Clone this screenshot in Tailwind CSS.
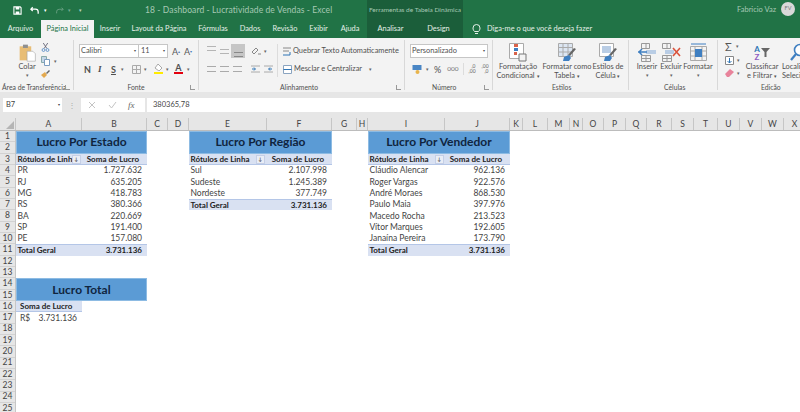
<!DOCTYPE html>
<html lang="pt-BR">
<head>
  <meta charset="UTF-8"/>
  <title>18 - Dashboard - Lucratividade de Vendas - Excel</title>
  <script src="https://cdn.jsdelivr.net/npm/@tailwindcss/browser@4"></script>
</head>
<body class="w-[800px] h-[412px] overflow-hidden bg-white flex flex-col font-['Lato','Liberation_Sans',sans-serif] text-[8.5px] leading-none text-[#444]">

  <!-- title bar -->
  <div class="h-[20px] shrink-0 bg-[#217346] flex items-center relative">
    <div class="flex items-center pl-[13px] gap-[8px] w-[145px]">
      <svg width="9" height="9" viewBox="0 0 10 10"><path d="M1 1h7l1 1v7H1z" fill="none" stroke="#fff" stroke-width="1.2"/><path d="M3 1h4v3H3zM3 6h4v3H3z" fill="#fff"/></svg>
      <svg width="10" height="9" viewBox="0 0 11 9"><path d="M3 1L1 3l2 2M1 3h5a3 3 0 0 1 3 3v2" fill="none" stroke="#fff" stroke-width="1.4"/></svg>
      <span class="text-white text-[5px] -ml-[4px]">▾</span>
      <svg width="9" height="9" viewBox="0 0 11 9" class="opacity-30"><path d="M8 1l2 2-2 2M10 3H5a3 3 0 0 0-3 3v2" fill="none" stroke="#fff" stroke-width="1.2"/></svg>
      <span class="text-white/40 text-[5px] -ml-[4px]">▾</span>
      <span class="text-white/70 text-[5px]">▾</span>
    </div>
    <span class="text-[#a6c9b4] text-[8.5px] tracking-[0.1px] whitespace-nowrap">18 - Dashboard - Lucratividade de Vendas - Excel</span>
    <div class="absolute left-[367px] top-0 w-[96px] h-[20px] bg-[#1b5e3a] flex items-center justify-center text-[#a6c9b4] text-[6.5px] whitespace-nowrap">Ferramentas de Tabela Dinâmica</div>
    <span class="absolute left-[737px] top-[6px] text-[#a6c9b4] text-[7.5px]">Fabricio Vaz</span>
    <div class="absolute left-[781px] top-[2px] w-[14px] h-[14px] rounded-full bg-[#d9d9d9] flex items-center justify-center text-[#777] text-[5.5px]">FV</div>
  </div>

  <!-- tabs -->
  <div class="h-[18px] shrink-0 bg-[#217346] flex text-[#e4efe8] text-[7.4px]">
    <div class="w-[41px] flex items-center justify-center">Arquivo</div>
    <div class="w-[53px] flex items-center justify-center bg-[#f3f3f3] text-[#217346]">Página Inicial</div>
    <div class="w-[32px] flex items-center justify-center">Inserir</div>
    <div class="w-[66px] flex items-center justify-center">Layout da Página</div>
    <div class="w-[42px] flex items-center justify-center">Fórmulas</div>
    <div class="w-[32px] flex items-center justify-center">Dados</div>
    <div class="w-[38px] flex items-center justify-center">Revisão</div>
    <div class="w-[29px] flex items-center justify-center">Exibir</div>
    <div class="w-[34px] flex items-center justify-center">Ajuda</div>
    <div class="w-[47px] flex items-center justify-center bg-[#1b5e3a]">Analisar</div>
    <div class="w-[49px] flex items-center justify-center bg-[#1b5e3a]">Design</div>
    <div class="flex items-center pl-[9px] gap-[6px]">
      <svg width="9" height="12" viewBox="0 0 9 12"><path d="M2.5 8.5C1.5 7.5 1 6.5 1 5a3.5 3.5 0 0 1 7 0c0 1.5-.5 2.5-1.5 3.5zM3 10.5h3" fill="none" stroke="#e4efe8"/></svg>
      <span>Diga-me o que você deseja fazer</span>
    </div>
  </div>

  <!-- ribbon -->
  <div class="h-[54px] shrink-0 bg-[#f3f3f3] flex text-[7.4px] text-[#505050]">
    <!-- area de transferencia -->
    <div class="w-[74px] shrink-0 flex flex-col border-r border-[#d8d8d8] my-[2px] relative">
      <div class="flex-1 flex pt-[3px]">
        <div class="w-[40px] pl-[14px] flex flex-col items-center">
          <svg width="19" height="19" viewBox="0 0 21 23" class="shrink-0"><path d="M1 4h14v17H1z" fill="#e8bd75"/><path d="M5 2h6v4H5z" fill="#8f8f8f"/><path d="M10 10h7l3 3v9H10z" fill="#fff" stroke="#a0a0a0" stroke-width=".7"/></svg>
          <span class="mt-[1px]">Colar</span>
          <span class="text-[5px] mt-[3px] text-[#666]">▾</span>
        </div>
        <div class="flex flex-col gap-[4px] pl-[1px]">
          <svg width="9" height="9" viewBox="0 0 9 10"><path d="M2 0l4 6M7 0L3 6" stroke="#667" fill="none"/><circle cx="2.3" cy="7.8" r="1.6" fill="none" stroke="#5b8fc7"/><circle cx="6.7" cy="7.8" r="1.6" fill="none" stroke="#5b8fc7"/></svg>
          <div class="flex items-center gap-[4px]">
            <svg width="9" height="10" viewBox="0 0 9 10"><path d="M.5.5h5v6h-5z" fill="#c5d6e8" stroke="#8aa"/><path d="M3.5 3.5h5v6h-5z" fill="#fff" stroke="#7a9cc0"/></svg>
            <span class="text-[5px] text-[#666]">▾</span>
          </div>
          <svg width="9" height="8" viewBox="0 0 9 8"><path d="M0 5l4-3 2 3-3 3z" fill="#e3a94f"/><path d="M5 3l3-3 1 1-3 3z" fill="#666"/></svg>
        </div>
      </div>
      <div class="h-[5px] flex items-center pl-[2px] text-[6.8px] whitespace-nowrap">Área de Transferência</div>
      <span class="absolute right-[3px] bottom-0 w-[5px] h-[5px] border-l border-b border-[#999]"></span>
    </div>

    <!-- fonte -->
    <div class="w-[125px] shrink-0 flex flex-col border-r border-[#d8d8d8] my-[2px] relative">
      <div class="flex-1 flex flex-col pl-[5px] pt-[4px]">
        <div class="flex items-center h-[14px]">
          <div class="w-[60px] h-[14px] bg-white border border-[#c6c6c6] flex items-center justify-between pl-[1px] pr-[2px]">Calibri<span class="text-[4px]">▾</span></div>
          <div class="w-[29px] h-[14px] bg-white border border-l-0 border-[#c6c6c6] flex items-center justify-between pl-[2px] pr-[2px]">11<span class="text-[4px]">▾</span></div>
          <span class="ml-[4px] w-[11px] text-[9px] text-[#555]">A<sup class="text-[4px] text-[#4a7ebb]">▴</sup></span>
          <span class="ml-[1px] text-[9px] text-[#555]">A<sup class="text-[4px] text-[#4a7ebb]">▾</sup></span>
        </div>
        <div class="flex items-center h-[14px] mt-[4px] pl-[5px]">
          <span class="w-[14px] font-bold text-[9px]">N</span>
          <span class="w-[13px] italic font-bold text-[9px] font-['Liberation_Serif']">I</span>
          <span class="w-[10px] underline font-bold text-[9px]">S</span>
          <span class="w-[11px] text-[5px] text-[#666]">▾</span>
          <svg width="9" height="9" viewBox="0 0 9 9"><path d="M.5.5h8v8h-8zM4.5.5v8M.5 4.5h8" fill="none" stroke="#aaa"/></svg>
          <span class="w-[13px] text-[5px] text-[#666] pl-[3px]">▾</span>
          <div class="flex flex-col items-center w-[9px]">
            <svg width="9" height="7" viewBox="0 0 9 7"><path d="M4 0l4 4-3 3-4-3z" fill="#fff" stroke="#888" stroke-width=".7"/></svg>
            <span class="w-[9px] h-[2px] bg-[#ffeb00] mt-[1px]"></span>
          </div>
          <span class="w-[11px] text-[5px] text-[#666] pl-[3px]">▾</span>
          <div class="flex flex-col items-center w-[9px]">
            <span class="text-[9px] font-bold h-[7px] leading-[7px]">A</span>
            <span class="w-[9px] h-[2px] bg-[#e3000f] mt-[1px]"></span>
          </div>
          <span class="text-[5px] text-[#666] pl-[4px]">▾</span>
        </div>
      </div>
      <div class="h-[5px] flex items-center justify-center text-[6.8px]">Fonte</div>
      <span class="absolute right-[3px] bottom-0 w-[5px] h-[5px] border-l border-b border-[#999]"></span>
    </div>

    <!-- alinhamento -->
    <div class="w-[206px] shrink-0 flex flex-col border-r border-[#d8d8d8] my-[2px] relative">
      <div class="flex-1 flex pt-[4px]">
        <div class="w-[78px] shrink-0 flex flex-col">
          <div class="flex items-center h-[14px] pl-[6px]">
            <div class="w-[13px] h-[14px] flex items-center justify-center"><span class="w-[9px] h-[5px] border-y border-[#b5b5b5] -translate-y-[3px]"></span></div>
            <div class="w-[13px] h-[14px] flex items-center justify-center"><span class="w-[9px] h-[5px] border-y border-[#b5b5b5]"></span></div>
            <div class="w-[14px] h-[14px] bg-[#c6c6c6] flex items-center justify-center"><span class="w-[9px] h-[5px] border-y border-[#888] translate-y-[3px]"></span></div>
            <svg width="10" height="9" viewBox="0 0 10 9" class="ml-[6px]"><path d="M1 5l4-4 2 2-4 4zM7 7h3" fill="none" stroke="#888"/></svg>
            <span class="text-[5px] text-[#666] ml-[3px]">▾</span>
          </div>
          <div class="flex items-center h-[14px] mt-[4px] pl-[8px] gap-[4px]">
            <span class="w-[9px] h-[6px] border-y border-[#aaa]"></span>
            <span class="w-[9px] h-[6px] border-y border-[#aaa]"></span>
            <span class="w-[9px] h-[6px] border-y border-[#aaa]"></span>
            <svg width="9" height="8" viewBox="0 0 9 8" class="ml-[5px]"><path d="M0 1h9M0 7h9" stroke="#aaa"/><path d="M1 4h3M3 2.5L4.5 4 3 5.5" stroke="#2f75b5" fill="none"/></svg>
            <svg width="9" height="8" viewBox="0 0 9 8"><path d="M0 1h9M0 7h9" stroke="#aaa"/><path d="M8 4H5M6 2.5L4.5 4 6 5.5" stroke="#2f75b5" fill="none"/></svg>
          </div>
        </div>
        <span class="w-px h-[33px] bg-[#dcdcdc]"></span>
        <div class="flex flex-col pl-[5px]">
          <div class="flex items-center h-[14px] gap-[2px] whitespace-nowrap">
            <svg width="8" height="9" viewBox="0 0 8 9"><path d="M0 8h5M7 5v3H5" stroke="#2f75b5" fill="none"/><path d="M0 1h8M0 4h6" stroke="#888"/></svg>
            Quebrar Texto Automaticamente
          </div>
          <div class="flex items-center h-[14px] mt-[4px] gap-[2px] whitespace-nowrap">
            <svg width="9" height="9" viewBox="0 0 9 9"><path d="M.5.5h8v8h-8z" fill="#fff" stroke="#8aa4c0"/><path d="M.5 4.5h8" stroke="#2f75b5"/></svg>
            Mesclar e Centralizar
            <span class="text-[5px] text-[#666] ml-[5px]">▾</span>
          </div>
        </div>
      </div>
      <div class="h-[5px] flex items-center pl-[81px] text-[6.8px]">Alinhamento</div>
      <span class="absolute right-[3px] bottom-0 w-[5px] h-[5px] border-l border-b border-[#999]"></span>
    </div>

    <!-- numero -->
    <div class="w-[88px] shrink-0 flex flex-col border-r border-[#d8d8d8] my-[2px] relative">
      <div class="flex-1 flex flex-col pl-[5px] pt-[4px]">
        <div class="w-[78px] h-[14px] bg-white border border-[#c6c6c6] flex items-center justify-between pl-[1px] pr-[2px]">Personalizado<span class="text-[4px]">▾</span></div>
        <div class="flex items-center h-[14px] mt-[4px] pl-[2px]">
          <svg width="10" height="10" viewBox="0 0 9 10"><path d="M0 1h9v5H0z" fill="#4a86c5"/><circle cx="5" cy="8" r="2" fill="#e8b44c"/></svg>
          <span class="text-[5px] text-[#666] ml-[4px]">▾</span>
          <span class="ml-[5px] text-[9px]">%</span>
          <span class="ml-[6px] text-[6.5px] text-[#777]">000</span>
          <span class="w-px h-[12px] bg-[#dcdcdc] ml-[4px]"></span>
          <span class="ml-[4px] text-[5px] leading-[5px] text-[#666] text-right w-[8px]">,0<br/>,00</span>
          <span class="ml-[5px] text-[5px] leading-[5px] text-[#666] text-right w-[8px]">,00<br/>,0</span>
        </div>
      </div>
      <div class="h-[5px] flex items-center pl-[27px] text-[6.8px]">Número</div>
      <span class="absolute right-[3px] bottom-0 w-[5px] h-[5px] border-l border-b border-[#999]"></span>
    </div>

    <!-- estilos -->
    <div class="w-[136px] shrink-0 flex flex-col border-r border-[#d8d8d8] my-[2px]">
      <div class="flex-1 flex pt-[3px]">
        <div class="w-[50px] flex flex-col items-center">
          <svg width="18" height="19" viewBox="0 0 18 19"><path d="M.5.5h14v15H.5z" fill="#fff" stroke="#aaa"/><path d="M5 1h4v3H5z" fill="#d9634a"/><path d="M5 5h4v3H5z" fill="#3f7fc1"/><path d="M5 9h3v3H5z" fill="#d9634a"/><path d="M10 11h7v7h-7z" fill="#f3f3f3" stroke="#777"/></svg>
          <span class="mt-[1px]">Formatação</span>
          <span class="mt-[2px] whitespace-nowrap">Condicional <span class="text-[5px]">▾</span></span>
        </div>
        <div class="w-[48px] flex flex-col items-center">
          <svg width="19" height="19" viewBox="0 0 19 19"><path d="M.5.5h14v13H.5z" fill="#dce6f2" stroke="#aaa"/><path d="M.5 4.5h14M.5 9h14M5 .5v13M10 .5v13" stroke="#aaa" fill="none"/><path d="M18 6l-6 7-2-1 6-7z" fill="#666"/><path d="M6 14l5-2 2 3-2 3H5z" fill="#3f7fc1"/></svg>
          <span class="mt-[1px] whitespace-nowrap">Formatar como</span>
          <span class="mt-[2px] whitespace-nowrap">Tabela <span class="text-[5px]">▾</span></span>
        </div>
        <div class="w-[34px] flex flex-col items-center">
          <svg width="19" height="19" viewBox="0 0 19 19"><path d="M.5.5h14v13H.5z" fill="#fff" stroke="#aaa"/><path d="M3 3h9v7H3z" fill="#b9cde5"/><path d="M18 6l-6 7-2-1 6-7z" fill="#666"/><path d="M6 14l5-2 2 3-2 3H5z" fill="#3f7fc1"/></svg>
          <span class="mt-[1px] whitespace-nowrap">Estilos de</span>
          <span class="mt-[2px] whitespace-nowrap">Célula <span class="text-[5px]">▾</span></span>
        </div>
      </div>
      <div class="h-[5px] flex items-center pl-[59px] text-[6.8px]">Estilos</div>
    </div>

    <!-- celulas -->
    <div class="w-[89px] shrink-0 flex flex-col border-r border-[#d8d8d8] my-[2px]">
      <div class="flex-1 flex pt-[3px] pl-[6px]">
        <div class="w-[24px] flex flex-col items-center">
          <svg width="19" height="19" viewBox="0 0 19 19"><path d="M3.5.5h8v5h-8zM3.5 12.5h9v6h-9zM8 .5v5M8 12.5v6M3.5 15.5h9" fill="none" stroke="#999"/><path d="M8 7h10v4H8z" fill="#b9cde5"/><path d="M0 9h9M4 6L1 9l3 3" fill="none" stroke="#3f7fc1" stroke-width="1.5"/></svg>
          <span class="mt-[1px]">Inserir</span>
          <span class="text-[5px] mt-[3px] text-[#666]">▾</span>
        </div>
        <div class="w-[24px] flex flex-col items-center">
          <svg width="19" height="19" viewBox="0 0 19 19"><path d="M.5.5h8v5h-8zM.5 12.5h9v6h-9zM5 .5v5M5 12.5v6M.5 15.5h9" fill="none" stroke="#999"/><path d="M3 7h9v4H3z" fill="#b9cde5"/><path d="M11 5l7 8M18 5l-7 8" stroke="#d9523c" stroke-width="1.6"/></svg>
          <span class="mt-[1px]">Excluir</span>
          <span class="text-[5px] mt-[3px] text-[#666]">▾</span>
        </div>
        <div class="w-[30px] flex flex-col items-center">
          <svg width="19" height="19" viewBox="0 0 19 19"><path d="M1.5 3.5h16v14h-16zM1.5 8h16M1.5 13h16M6 3.5v14M13 3.5v14" fill="none" stroke="#aaa"/><path d="M6 6h7v8H6z" fill="#3f7fc1"/><path d="M2 1h15" stroke="#3f7fc1"/></svg>
          <span class="mt-[1px]">Formatar</span>
          <span class="text-[5px] mt-[3px] text-[#666]">▾</span>
        </div>
      </div>
      <div class="h-[5px] flex items-center pl-[35px] text-[6.8px]">Células</div>
    </div>

    <!-- edicao -->
    <div class="flex-1 flex flex-col my-[2px] overflow-hidden">
      <div class="flex-1 flex pt-[3px] pl-[7px]">
        <div class="w-[16px] -mt-[2px] flex flex-col gap-[3px] shrink-0">
          <div class="flex items-center gap-[4px] h-[11px]"><span class="text-[11px] text-[#555]">Σ</span><span class="text-[5px] text-[#666]">▾</span></div>
          <div class="flex items-center gap-[3px] h-[10px]"><svg width="9" height="9" viewBox="0 0 9 9"><path d="M.5.5h8v8h-8z" fill="#fff" stroke="#888"/><path d="M4.5 2v5M2.5 5l2 2 2-2" fill="none" stroke="#2f75b5"/></svg><span class="text-[5px] text-[#666]">▾</span></div>
          <div class="flex items-center gap-[3px] h-[10px]"><svg width="9" height="8" viewBox="0 0 9 8"><path d="M0 5l5-5 4 3-5 5H2z" fill="#e8839b"/></svg><span class="text-[5px] text-[#666]">▾</span></div>
        </div>
        <div class="w-[36px] ml-[3px] flex flex-col items-center shrink-0">
          <div class="flex items-center h-[19px]">
            <span class="text-[8px] leading-[8px] font-bold text-center"><span class="text-[#2f75b5]">A</span><br/><span class="text-[#8e5cc2]">Z</span></span>
            <svg width="9" height="9" viewBox="0 0 9 9" class="ml-[1px]"><path d="M0 0h9L5.5 4v5h-2V4z" fill="#666"/></svg>
          </div>
          <span class="mt-[1px] whitespace-nowrap">Classificar</span>
          <span class="mt-[2px] whitespace-nowrap">e Filtrar <span class="text-[5px]">▾</span></span>
        </div>
        <div class="ml-[2px] flex flex-col items-start shrink-0 w-[40px]">
          <svg width="19" height="19" viewBox="0 0 19 19" class="ml-[7px]"><circle cx="11" cy="7" r="5.5" fill="#fff" stroke="#3f7fc1" stroke-width="1.6"/><path d="M7 11l-5 6" stroke="#3f7fc1" stroke-width="2.2"/></svg>
          <span class="mt-[1px] whitespace-nowrap">Localizar e</span>
          <span class="mt-[2px] whitespace-nowrap">Selecionar</span>
        </div>
      </div>
      <div class="h-[5px] flex items-center pl-[43px] text-[6.8px]">Edição</div>
    </div>
  </div>

  <!-- formula bar -->
  <div class="h-[26px] shrink-0 bg-[#e6e6e6] flex items-center text-[7.5px]">
    <div class="w-[59px] h-[14px] ml-[3px] bg-white flex items-center justify-between pl-[3px] pr-[2px]">B7<span class="text-[4px]">▾</span></div>
    <div class="w-[19px] text-center text-[#aaa] text-[8px]">⋮</div>
    <div class="w-[64px] h-[14px] bg-white flex items-center text-[#bbb]">
      <svg width="8" height="8" viewBox="0 0 8 8" class="ml-[7px]"><path d="M1 1l6 6M7 1L1 7" stroke="#c4c4c4"/></svg>
      <svg width="9" height="8" viewBox="0 0 9 8" class="ml-[12px]"><path d="M1 4l2.5 3L8 1" fill="none" stroke="#c4c4c4"/></svg>
      <span class="ml-[11px] text-[#666] italic text-[9px] font-['Liberation_Serif']">fx</span>
    </div>
    <div class="flex-1 h-[14px] ml-[2px] bg-white flex items-center pl-[6px]">380365,78</div>
  </div>

  <!-- column headers -->
  <div class="h-[12px] shrink-0 flex bg-[#e6e6e6] text-[8.5px] text-[#444]">
    <div class="w-[16px] shrink-0 border-r border-[#c6c6c6] flex items-end justify-end"><span class="w-0 h-0 border-l-[8px] border-b-[8px] border-l-transparent border-b-[#b5b5b5] mr-[1px] mb-[1px]"></span></div>
    <div class="w-[66px] shrink-0 border-r border-[#c6c6c6] flex items-center justify-center">A</div>
    <div class="w-[65px] shrink-0 border-r border-[#c6c6c6] flex items-center justify-center">B</div>
    <div class="w-[21px] shrink-0 border-r border-[#c6c6c6] flex items-center justify-center">C</div>
    <div class="w-[21px] shrink-0 border-r border-[#c6c6c6] flex items-center justify-center">D</div>
    <div class="w-[78px] shrink-0 border-r border-[#c6c6c6] flex items-center justify-center">E</div>
    <div class="w-[65px] shrink-0 border-r border-[#c6c6c6] flex items-center justify-center">F</div>
    <div class="w-[25px] shrink-0 border-r border-[#c6c6c6] flex items-center justify-center">G</div>
    <div class="w-[11px] shrink-0 border-r border-[#c6c6c6] flex items-center justify-center">H</div>
    <div class="w-[77px] shrink-0 border-r border-[#c6c6c6] flex items-center justify-center">I</div>
    <div class="w-[65px] shrink-0 border-r border-[#c6c6c6] flex items-center justify-center">J</div>
    <div class="w-[13px] shrink-0 border-r border-[#c6c6c6] flex items-center justify-center">K</div>
    <div class="w-[25px] shrink-0 border-r border-[#c6c6c6] flex items-center justify-center">L</div>
    <div class="w-[22px] shrink-0 border-r border-[#c6c6c6] flex items-center justify-center">M</div>
    <div class="w-[13px] shrink-0 border-r border-[#c6c6c6] flex items-center justify-center">N</div>
    <div class="w-[21px] shrink-0 border-r border-[#c6c6c6] flex items-center justify-center">O</div>
    <div class="w-[22px] shrink-0 border-r border-[#c6c6c6] flex items-center justify-center">P</div>
    <div class="w-[21px] shrink-0 border-r border-[#c6c6c6] flex items-center justify-center">Q</div>
    <div class="w-[25px] shrink-0 border-r border-[#c6c6c6] flex items-center justify-center">R</div>
    <div class="w-[22px] shrink-0 border-r border-[#c6c6c6] flex items-center justify-center">S</div>
    <div class="w-[24px] shrink-0 border-r border-[#c6c6c6] flex items-center justify-center">T</div>
    <div class="w-[22px] shrink-0 border-r border-[#c6c6c6] flex items-center justify-center">U</div>
    <div class="w-[22px] shrink-0 border-r border-[#c6c6c6] flex items-center justify-center">V</div>
    <div class="w-[22px] shrink-0 border-r border-[#c6c6c6] flex items-center justify-center">W</div>
    <div class="w-[22px] shrink-0 border-r border-[#c6c6c6] flex items-center justify-center">X</div>
  </div>

  <!-- sheet -->
  <div class="flex-1 flex min-h-0 border-t border-[#bcbcbc]">
    <div class="w-[16px] shrink-0 bg-[#e6e6e6] border-r border-[#c6c6c6] flex flex-col text-[8.5px] text-[#444]">
      <div class="h-[11.33px] shrink-0 border-b border-[#d2d2d2] flex items-center justify-center">1</div>
      <div class="h-[11.33px] shrink-0 border-b border-[#d2d2d2] flex items-center justify-center">2</div>
      <div class="h-[11.33px] shrink-0 border-b border-[#d2d2d2] flex items-center justify-center">3</div>
      <div class="h-[11.33px] shrink-0 border-b border-[#d2d2d2] flex items-center justify-center">4</div>
      <div class="h-[11.33px] shrink-0 border-b border-[#d2d2d2] flex items-center justify-center">5</div>
      <div class="h-[11.33px] shrink-0 border-b border-[#d2d2d2] flex items-center justify-center">6</div>
      <div class="h-[11.33px] shrink-0 border-b border-[#d2d2d2] flex items-center justify-center">7</div>
      <div class="h-[11.33px] shrink-0 border-b border-[#d2d2d2] flex items-center justify-center">8</div>
      <div class="h-[11.33px] shrink-0 border-b border-[#d2d2d2] flex items-center justify-center">9</div>
      <div class="h-[11.33px] shrink-0 border-b border-[#d2d2d2] flex items-center justify-center">10</div>
      <div class="h-[11.33px] shrink-0 border-b border-[#d2d2d2] flex items-center justify-center">11</div>
      <div class="h-[11.33px] shrink-0 border-b border-[#d2d2d2] flex items-center justify-center">12</div>
      <div class="h-[11.33px] shrink-0 border-b border-[#d2d2d2] flex items-center justify-center">13</div>
      <div class="h-[11.33px] shrink-0 border-b border-[#d2d2d2] flex items-center justify-center">14</div>
      <div class="h-[11.33px] shrink-0 border-b border-[#d2d2d2] flex items-center justify-center">15</div>
      <div class="h-[11.33px] shrink-0 border-b border-[#d2d2d2] flex items-center justify-center">16</div>
      <div class="h-[11.33px] shrink-0 border-b border-[#d2d2d2] flex items-center justify-center">17</div>
      <div class="h-[11.33px] shrink-0 border-b border-[#d2d2d2] flex items-center justify-center">18</div>
      <div class="h-[11.33px] shrink-0 border-b border-[#d2d2d2] flex items-center justify-center">19</div>
      <div class="h-[11.33px] shrink-0 border-b border-[#d2d2d2] flex items-center justify-center">20</div>
      <div class="h-[11.33px] shrink-0 border-b border-[#d2d2d2] flex items-center justify-center">21</div>
      <div class="h-[11.33px] shrink-0 border-b border-[#d2d2d2] flex items-center justify-center">22</div>
      <div class="h-[11.33px] shrink-0 border-b border-[#d2d2d2] flex items-center justify-center">23</div>
      <div class="h-[11.33px] shrink-0 border-b border-[#d2d2d2] flex items-center justify-center">24</div>
      <div class="h-[11.33px] shrink-0 border-b border-[#d2d2d2] flex items-center justify-center">25</div>
    </div>

    <div class="flex-1 grid grid-cols-[66px_65px_21px_21px_78px_65px_25px_11px_77px_65px] grid-rows-[repeat(25,11.33px)] text-[8.5px] text-[#444]">
      <!-- por estado -->
      <div class="col-start-1 col-span-2 row-start-1 row-span-2 bg-[#5b9bd5] border border-[#8dbbe3] flex items-center justify-center text-[12px] font-bold text-[#10253f]">Lucro Por Estado</div>
      <div class="col-start-1 row-start-3 bg-[#d9e1f2] border-b border-[#b4c6e7] flex items-center font-bold text-[8px] text-[#222] pl-[1.5px] overflow-hidden relative whitespace-nowrap">Rótulos de Linha<span class="absolute right-[1px] top-[1px] w-[9px] h-[9px] bg-[#e9edf6] border border-[#c5cfe6] text-[5px] flex items-center justify-center text-[#555]">↓</span></div>
      <div class="col-start-2 row-start-3 bg-[#d9e1f2] border-b border-[#b4c6e7] flex items-center justify-end font-bold text-[8px] text-[#222] pr-[8px]">Soma de Lucro</div>
      <div class="col-start-1 col-span-2 row-start-4 flex items-center justify-between pl-[1.5px] pr-[5px]"><span>PR</span><span>1.727.632</span></div>
      <div class="col-start-1 col-span-2 row-start-5 flex items-center justify-between pl-[1.5px] pr-[5px]"><span>RJ</span><span>635.205</span></div>
      <div class="col-start-1 col-span-2 row-start-6 flex items-center justify-between pl-[1.5px] pr-[5px]"><span>MG</span><span>418.783</span></div>
      <div class="col-start-1 col-span-2 row-start-7 flex items-center justify-between pl-[1.5px] pr-[5px]"><span>RS</span><span>380.366</span></div>
      <div class="col-start-1 col-span-2 row-start-8 flex items-center justify-between pl-[1.5px] pr-[5px]"><span>BA</span><span>220.669</span></div>
      <div class="col-start-1 col-span-2 row-start-9 flex items-center justify-between pl-[1.5px] pr-[5px]"><span>SP</span><span>191.400</span></div>
      <div class="col-start-1 col-span-2 row-start-10 flex items-center justify-between pl-[1.5px] pr-[5px]"><span>PE</span><span>157.080</span></div>
      <div class="col-start-1 col-span-2 row-start-11 bg-[#d9e1f2] border-t border-[#b4c6e7] flex items-center justify-between pl-[1.5px] pr-[5px] font-bold text-[8px] text-[#222]"><span>Total Geral</span><span>3.731.136</span></div>

      <!-- por regiao -->
      <div class="col-start-5 col-span-2 row-start-1 row-span-2 bg-[#5b9bd5] border border-[#8dbbe3] flex items-center justify-center text-[12px] font-bold text-[#10253f]">Lucro Por Região</div>
      <div class="col-start-5 row-start-3 bg-[#d9e1f2] border-b border-[#b4c6e7] flex items-center font-bold text-[8px] text-[#222] pl-[1.5px] relative whitespace-nowrap">Rótulos de Linha<span class="absolute right-[2px] top-[1px] w-[9px] h-[9px] bg-[#e9edf6] border border-[#c5cfe6] text-[5px] flex items-center justify-center text-[#555]">↓</span></div>
      <div class="col-start-6 row-start-3 bg-[#d9e1f2] border-b border-[#b4c6e7] flex items-center justify-end font-bold text-[8px] text-[#222] pr-[8px]">Soma de Lucro</div>
      <div class="col-start-5 col-span-2 row-start-4 flex items-center justify-between pl-[1.5px] pr-[5px]"><span>Sul</span><span>2.107.998</span></div>
      <div class="col-start-5 col-span-2 row-start-5 flex items-center justify-between pl-[1.5px] pr-[5px]"><span>Sudeste</span><span>1.245.389</span></div>
      <div class="col-start-5 col-span-2 row-start-6 flex items-center justify-between pl-[1.5px] pr-[5px]"><span>Nordeste</span><span>377.749</span></div>
      <div class="col-start-5 col-span-2 row-start-7 bg-[#d9e1f2] border-t border-[#b4c6e7] flex items-center justify-between pl-[1.5px] pr-[5px] font-bold text-[8px] text-[#222]"><span>Total Geral</span><span>3.731.136</span></div>

      <!-- por vendedor -->
      <div class="col-start-9 col-span-2 row-start-1 row-span-2 bg-[#5b9bd5] border border-[#8dbbe3] flex items-center justify-center text-[12px] font-bold text-[#10253f]">Lucro Por Vendedor</div>
      <div class="col-start-9 row-start-3 bg-[#d9e1f2] border-b border-[#b4c6e7] flex items-center font-bold text-[8px] text-[#222] pl-[1.5px] relative whitespace-nowrap">Rótulos de Linha<span class="absolute right-[1px] top-[1px] w-[9px] h-[9px] bg-[#e9edf6] border border-[#c5cfe6] text-[5px] flex items-center justify-center text-[#555]">↓</span></div>
      <div class="col-start-10 row-start-3 bg-[#d9e1f2] border-b border-[#b4c6e7] flex items-center justify-end font-bold text-[8px] text-[#222] pr-[8px]">Soma de Lucro</div>
      <div class="col-start-9 col-span-2 row-start-4 flex items-center justify-between pl-[1.5px] pr-[5px]"><span>Cláudio Alencar</span><span>962.136</span></div>
      <div class="col-start-9 col-span-2 row-start-5 flex items-center justify-between pl-[1.5px] pr-[5px]"><span>Roger Vargas</span><span>922.576</span></div>
      <div class="col-start-9 col-span-2 row-start-6 flex items-center justify-between pl-[1.5px] pr-[5px]"><span>André Moraes</span><span>868.530</span></div>
      <div class="col-start-9 col-span-2 row-start-7 flex items-center justify-between pl-[1.5px] pr-[5px]"><span>Paulo Maia</span><span>397.976</span></div>
      <div class="col-start-9 col-span-2 row-start-8 flex items-center justify-between pl-[1.5px] pr-[5px]"><span>Macedo Rocha</span><span>213.523</span></div>
      <div class="col-start-9 col-span-2 row-start-9 flex items-center justify-between pl-[1.5px] pr-[5px]"><span>Vítor Marques</span><span>192.605</span></div>
      <div class="col-start-9 col-span-2 row-start-10 flex items-center justify-between pl-[1.5px] pr-[5px]"><span>Janaína Pereira</span><span>173.790</span></div>
      <div class="col-start-9 col-span-2 row-start-11 bg-[#d9e1f2] border-t border-[#b4c6e7] flex items-center justify-between pl-[1.5px] pr-[5px] font-bold text-[8px] text-[#222]"><span>Total Geral</span><span>3.731.136</span></div>

      <!-- total -->
      <div class="col-start-1 col-span-2 row-start-14 row-span-2 bg-[#5b9bd5] border border-[#8dbbe3] flex items-center justify-center text-[12px] font-bold text-[#10253f]">Lucro Total</div>
      <div class="col-start-1 row-start-16 bg-[#d9e1f2] border-b border-[#b4c6e7] flex items-center font-bold text-[8px] text-[#222] pl-[4px] whitespace-nowrap">Soma de Lucro</div>
      <div class="col-start-1 row-start-17 flex items-center justify-between pl-[4px] pr-[5px]"><span>R$</span><span>3.731.136</span></div>
    </div>
  </div>
</body>
</html>
